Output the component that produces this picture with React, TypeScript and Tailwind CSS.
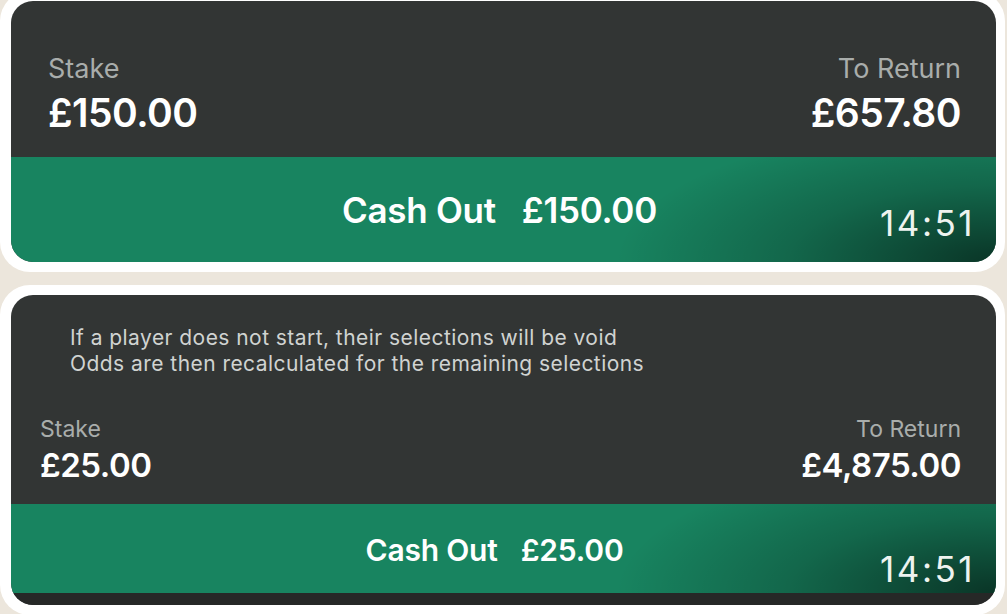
import React from "react";

const font = { fontFamily: "Inter, 'Noto Sans', sans-serif" };

function Shade() {
  return (
    <div className="pointer-events-none absolute inset-0 bg-[radial-gradient(380px_140px_at_100%_100%,rgba(0,0,0,0.6),rgba(0,0,0,0.22)_55%,transparent)]" />
  );
}

export default function App() {
  return (
    <div
      className="relative h-[614px] w-[1007px] overflow-hidden bg-[#ece6dc]"
      style={font}
    >
      <div className="mt-[-9px] flex flex-col gap-[13px]">
        {/* Bubble 1 */}
        <div className="w-[1005px] rounded-[30px] bg-white pb-[10px] pl-[11px] pr-[9px] pt-[10px]">
          <div className="flex h-[261px] flex-col overflow-hidden rounded-[22px] bg-[#323534]">
            <div className="flex h-[156px] justify-between pl-[37px] pr-[35px] pt-[52px]">
              <div className="flex flex-col">
                <span className="text-[27px] leading-[32px] text-[#a9adab]">Stake</span>
                <span className="mt-[7px] text-[39px] font-semibold leading-[42px] tracking-[-0.5px] text-white">
                  £150.00
                </span>
              </div>
              <div className="flex flex-col items-end">
                <span className="text-[27px] leading-[32px] text-[#a9adab]">To Return</span>
                <span className="mt-[7px] text-[39px] font-semibold leading-[42px] tracking-[-0.5px] text-white">
                  £657.80
                </span>
              </div>
            </div>
            <div className="relative flex flex-1 items-center justify-center bg-[#188460] pr-[8px] pt-[2px]">
              <Shade />
              <span className="relative flex gap-[26px] text-[35px] font-semibold tracking-[-0.3px] text-white">
                <span>Cash Out</span>
                <span>£150.00</span>
              </span>
              <span className="absolute bottom-[21px] right-[21px] text-[35px] leading-[35px] tracking-[2.5px] text-[#eef3ef]">
                14:51
              </span>
            </div>
          </div>
        </div>

        {/* Bubble 2 */}
        <div className="w-[1005px] rounded-[30px] bg-white pb-[10px] pl-[11px] pr-[9px] pt-[10px]">
          <div className="flex h-[310px] flex-col overflow-hidden rounded-[22px] bg-[#323534]">
            <div className="flex h-[209px] flex-col pr-[35px]">
              <div className="pl-[59px] pt-[30px] text-[21px] leading-[26px] tracking-[0.45px] text-[#d0d3d1]">
                <div>If a player does not start, their selections will be void</div>
                <div>Odds are then recalculated for the remaining selections</div>
              </div>
              <div className="mt-[38px] flex justify-between pl-[29px]">
                <div className="flex flex-col">
                  <span className="text-[23px] leading-[28px] text-[#a9adab]">Stake</span>
                  <span className="mt-[4px] text-[33px] font-semibold leading-[36px] tracking-[-0.5px] text-white">
                    £25.00
                  </span>
                </div>
                <div className="flex flex-col items-end">
                  <span className="text-[23px] leading-[28px] text-[#a9adab]">To Return</span>
                  <span className="mt-[4px] text-[33px] font-semibold leading-[36px] tracking-[-0.5px] text-white">
                    £4,875.00
                  </span>
                </div>
              </div>
            </div>
            <div className="relative flex h-[89px] items-center justify-center bg-[#188460] pr-[18px] pt-[3px]">
              <Shade />
              <span className="relative flex gap-[23px] text-[30px] font-semibold tracking-[-0.2px] text-white">
                <span>Cash Out</span>
                <span>£25.00</span>
              </span>
              <span className="absolute bottom-[6px] right-[21px] text-[35px] leading-[35px] tracking-[2.5px] text-[#eef3ef]">
                14:51
              </span>
            </div>
            <div className="flex-1 bg-[#262827]" />
          </div>
        </div>
      </div>
    </div>
  );
}
